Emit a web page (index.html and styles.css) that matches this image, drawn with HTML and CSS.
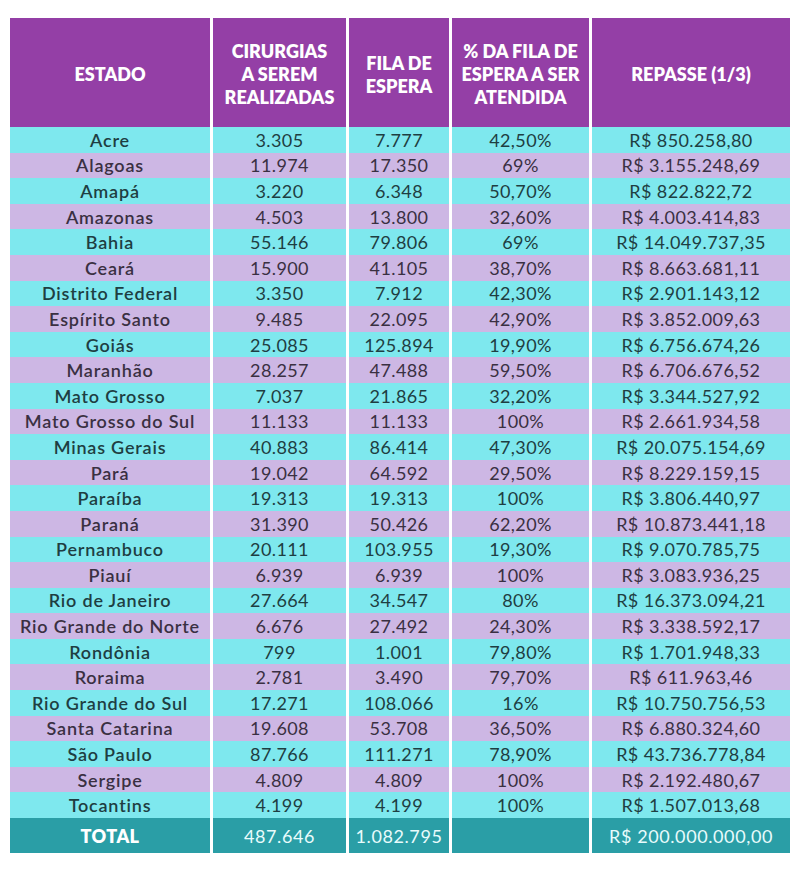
FILE: index.html
```html
<!DOCTYPE html>
<html lang="pt-BR">
<head>
<meta charset="utf-8">
<title>Repasse</title>
<link rel="stylesheet" href="styles.css">
</head>
<body>
<div class="table">
  <div class="h">ESTADO</div>
  <div class="h">CIRURGIAS<br>A SEREM<br>REALIZADAS</div>
  <div class="h">FILA DE<br>ESPERA</div>
  <div class="h">% DA FILA DE<br>ESPERA A SER<br>ATENDIDA</div>
  <div class="h">REPASSE (1/3)</div>

  <div class="c a s">Acre</div><div class="c a">3.305</div><div class="c a">7.777</div><div class="c a">42,50%</div><div class="c a">R$ 850.258,80</div>
  <div class="c b s">Alagoas</div><div class="c b">11.974</div><div class="c b">17.350</div><div class="c b">69%</div><div class="c b">R$ 3.155.248,69</div>
  <div class="c a s">Amapá</div><div class="c a">3.220</div><div class="c a">6.348</div><div class="c a">50,70%</div><div class="c a">R$ 822.822,72</div>
  <div class="c b s">Amazonas</div><div class="c b">4.503</div><div class="c b">13.800</div><div class="c b">32,60%</div><div class="c b">R$ 4.003.414,83</div>
  <div class="c a s">Bahia</div><div class="c a">55.146</div><div class="c a">79.806</div><div class="c a">69%</div><div class="c a">R$ 14.049.737,35</div>
  <div class="c b s">Ceará</div><div class="c b">15.900</div><div class="c b">41.105</div><div class="c b">38,70%</div><div class="c b">R$ 8.663.681,11</div>
  <div class="c a s">Distrito Federal</div><div class="c a">3.350</div><div class="c a">7.912</div><div class="c a">42,30%</div><div class="c a">R$ 2.901.143,12</div>
  <div class="c b s">Espírito Santo</div><div class="c b">9.485</div><div class="c b">22.095</div><div class="c b">42,90%</div><div class="c b">R$ 3.852.009,63</div>
  <div class="c a s">Goiás</div><div class="c a">25.085</div><div class="c a">125.894</div><div class="c a">19,90%</div><div class="c a">R$ 6.756.674,26</div>
  <div class="c b s">Maranhão</div><div class="c b">28.257</div><div class="c b">47.488</div><div class="c b">59,50%</div><div class="c b">R$ 6.706.676,52</div>
  <div class="c a s">Mato Grosso</div><div class="c a">7.037</div><div class="c a">21.865</div><div class="c a">32,20%</div><div class="c a">R$ 3.344.527,92</div>
  <div class="c b s">Mato Grosso do Sul</div><div class="c b">11.133</div><div class="c b">11.133</div><div class="c b">100%</div><div class="c b">R$ 2.661.934,58</div>
  <div class="c a s">Minas Gerais</div><div class="c a">40.883</div><div class="c a">86.414</div><div class="c a">47,30%</div><div class="c a">R$ 20.075.154,69</div>
  <div class="c b s">Pará</div><div class="c b">19.042</div><div class="c b">64.592</div><div class="c b">29,50%</div><div class="c b">R$ 8.229.159,15</div>
  <div class="c a s">Paraíba</div><div class="c a">19.313</div><div class="c a">19.313</div><div class="c a">100%</div><div class="c a">R$ 3.806.440,97</div>
  <div class="c b s">Paraná</div><div class="c b">31.390</div><div class="c b">50.426</div><div class="c b">62,20%</div><div class="c b">R$ 10.873.441,18</div>
  <div class="c a s">Pernambuco</div><div class="c a">20.111</div><div class="c a">103.955</div><div class="c a">19,30%</div><div class="c a">R$ 9.070.785,75</div>
  <div class="c b s">Piauí</div><div class="c b">6.939</div><div class="c b">6.939</div><div class="c b">100%</div><div class="c b">R$ 3.083.936,25</div>
  <div class="c a s">Rio de Janeiro</div><div class="c a">27.664</div><div class="c a">34.547</div><div class="c a">80%</div><div class="c a">R$ 16.373.094,21</div>
  <div class="c b s">Rio Grande do Norte</div><div class="c b">6.676</div><div class="c b">27.492</div><div class="c b">24,30%</div><div class="c b">R$ 3.338.592,17</div>
  <div class="c a s">Rondônia</div><div class="c a">799</div><div class="c a">1.001</div><div class="c a">79,80%</div><div class="c a">R$ 1.701.948,33</div>
  <div class="c b s">Roraima</div><div class="c b">2.781</div><div class="c b">3.490</div><div class="c b">79,70%</div><div class="c b">R$ 611.963,46</div>
  <div class="c a s">Rio Grande do Sul</div><div class="c a">17.271</div><div class="c a">108.066</div><div class="c a">16%</div><div class="c a">R$ 10.750.756,53</div>
  <div class="c b s">Santa Catarina</div><div class="c b">19.608</div><div class="c b">53.708</div><div class="c b">36,50%</div><div class="c b">R$ 6.880.324,60</div>
  <div class="c a s">São Paulo</div><div class="c a">87.766</div><div class="c a">111.271</div><div class="c a">78,90%</div><div class="c a">R$ 43.736.778,84</div>
  <div class="c b s">Sergipe</div><div class="c b">4.809</div><div class="c b">4.809</div><div class="c b">100%</div><div class="c b">R$ 2.192.480,67</div>
  <div class="c a s">Tocantins</div><div class="c a">4.199</div><div class="c a">4.199</div><div class="c a">100%</div><div class="c a">R$ 1.507.013,68</div>

  <div class="t tl">TOTAL</div><div class="t">487.646</div><div class="t">1.082.795</div><div class="t"></div><div class="t">R$ 200.000.000,00</div>
</div>
</body>
</html>
```
FILE: styles.css
```css
html, body {
  margin: 0;
  background: #ffffff;
}
body {
  padding: 18px 10px 0 10px;
  font-family: Lato, "Open Sans", sans-serif;
}
.table {
  display: grid;
  grid-template-columns: 200px 133px 100px 137px 198px;
  grid-template-rows: 109px repeat(27, 25.6px) 35px;
  column-gap: 3px;
  row-gap: 0;
  width: 780px;
}
.h {
  background: #943fa6;
  color: #ffffff;
  font-weight: 800;
  font-size: 18px;
  line-height: 23px;
  padding-top: 4px;
  display: flex;
  align-items: center;
  justify-content: center;
  text-align: center;
}
.c {
  display: flex;
  align-items: center;
  justify-content: center;
  font-size: 18px;
  font-weight: 400;
  letter-spacing: 0.4px;
  white-space: nowrap;
}
.a {
  background: #7ee8ee;
  color: #1e3e42;
}
.b {
  background: #cdb7e4;
  color: #3a3042;
}
.s {
  font-weight: 600;
  letter-spacing: 0.8px;
}
.t {
  background: #2a9ea6;
  color: #e8fbfc;
  display: flex;
  align-items: center;
  justify-content: center;
  font-size: 18px;
  font-weight: 400;
  letter-spacing: 0.6px;
  white-space: nowrap;
}
.tl {
  font-weight: 800;
  color: #ffffff;
  letter-spacing: 0.4px;
}
```
